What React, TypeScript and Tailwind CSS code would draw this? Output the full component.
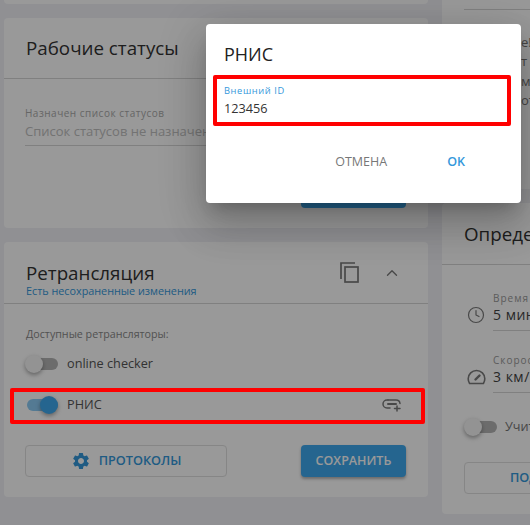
import { Clock, ChevronUp } from 'lucide-react';
import { MdSettings } from 'react-icons/md';

function Toggle({ on }: { on?: boolean }) {
  return (
    <div className="relative h-[12px] w-[31px] shrink-0">
      <div className={`h-[12px] w-[31px] rounded-full ${on ? 'bg-[#3fa9ee]/60' : 'bg-[#b5b5b5]'}`} />
      <div
        className={`absolute top-[-3px] h-[18px] w-[18px] rounded-full shadow-[0_2px_4px_rgba(0,0,0,0.35)] ${
          on ? 'left-[13px] bg-[#3fa9ee]' : 'left-[-2px] bg-[#f5f5f5]'
        }`}
      />
    </div>
  );
}

function LinkPlus() {
  return (
    <svg width="20" height="14" viewBox="0 0 20 14" fill="none" stroke="#7a7a7a" strokeWidth="1.5" strokeLinecap="round">
      <path d="M6 2H5a4 4 0 0 0 0 8h3" />
      <path d="M6 6h8" strokeWidth="2" />
      <path d="M6 2h8a4 4 0 0 1 4 3.5" />
      <path d="M15 8v5M12.5 10.5h5.5" />
    </svg>
  );
}

function CopyIcon() {
  return (
    <svg width="19" height="21" viewBox="0 0 19 21" fill="none" stroke="#7a7a7a" strokeWidth="1.7">
      <path d="M1 17V1h14" />
      <rect x="5" y="5" width="13" height="15" />
    </svg>
  );
}

function GaugeIcon() {
  return (
    <svg width="19" height="18" viewBox="0 0 19 18" fill="none" stroke="#7a7a7a" strokeWidth="1.6" strokeLinecap="round">
      <path d="M2.6 15.5a8.6 8.6 0 0 1-1.4-4.8A8.4 8.4 0 0 1 9.5 2.5c4.6 0 8.3 3.7 8.3 8.2 0 1.8-.5 3.4-1.4 4.8z" />
      <path d="M8.5 11.5l4-4" strokeWidth="2.4" />
    </svg>
  );
}

function Field({ label, value, icon }: { label: string; value: string; icon: React.ReactNode }) {
  return (
    <div className="flex items-start">
      <div className="mt-[15px] w-[29px] shrink-0 pl-[3px]">{icon}</div>
      <div className="w-[200px] border-b border-[#d5d5d5] pb-[5px]">
        <div className="whitespace-nowrap text-[10px] leading-[14px] tracking-[1px] text-[#999]">{label}</div>
        <div className="whitespace-nowrap text-[14px] leading-[20px] tracking-[0.5px] text-[#444]">{value}</div>
      </div>
    </div>
  );
}

export default function App() {
  return (
    <div className="relative h-[525px] w-[530px] overflow-hidden bg-[#f0f0f5] font-['Open_Sans',sans-serif]">
      <div className="flex gap-[14px] pl-1">
        {/* left column */}
        <div className="flex w-[424px] shrink-0 flex-col gap-[14px]">
          <div className="h-1 rounded-b bg-white" />

          <div className="h-[210px] rounded bg-white">
            <div className="flex h-[61px] items-center border-b border-[#d5d5d5] px-[22px] pt-px">
              <h2 className="text-[18.75px] font-medium text-[#333]">Рабочие статусы</h2>
            </div>
            <div className="px-[21px] pt-[27px]">
              <div className="whitespace-nowrap text-[10px] leading-[14px] tracking-[0.5px] text-[#aaa]">Назначен список статусов</div>
              <div className="mt-px w-[190px] whitespace-nowrap border-b border-[#d5d5d5] pb-[4px] text-[13px] leading-[20px] text-[#c0c0c0]">
                Список статусов не назначен
              </div>
            </div>
            <div className="mt-[39px] flex justify-end pr-[22px]">
              <div className="h-[23px] w-[105px] rounded-b-sm bg-[#3fa9ee]" />
            </div>
          </div>

          <div className="h-[255px] rounded bg-white">
            <div className="relative h-[62px] border-b border-[#d5d5d5] px-[22px] pt-[18px]">
              <h2 className="text-[18.75px] font-medium leading-[26px] text-[#333]">Ретрансляция</h2>
              <div className="-mt-[2px] text-[10.8px] leading-[14px] text-[#3498db]">Есть несохраненные изменения</div>
              <div className="absolute right-[27px] top-[20px] flex items-center gap-[24px] text-[#7a7a7a]">
                <CopyIcon />
                <ChevronUp size={18} strokeWidth={1.8} />
              </div>
            </div>
            <div className="px-[21px] pt-[22px]">
              <div className="pl-px text-[10.7px] leading-[16px] text-[#888]">Доступные ретрансляторы:</div>
              <div className="mt-[11px] flex h-[22px] items-center gap-[9px] pl-[2px]">
                <Toggle />
                <span className="text-[12.7px] text-[#555]">online checker</span>
              </div>
              <div className="mt-[19px] flex h-[22px] items-center pl-[2px]">
                <Toggle on />
                <span className="ml-[9px] text-[12.7px] text-[#555]">РНИС</span>
                <div className="ml-auto mr-[5px] -mt-[1px]">
                  <LinkPlus />
                </div>
              </div>
              <div className="mt-[29px] flex justify-between pr-px">
                <div className="flex h-[32px] w-[202px] items-center justify-center gap-[8px] rounded-sm border border-[#e0e0e0] text-[12.7px] font-semibold text-[#3498db]">
                  <MdSettings size={20} />
                  ПРОТОКОЛЫ
                </div>
                <div className="flex h-[32px] w-[105px] items-center justify-center rounded-sm bg-[#3fa9ee] text-[12.5px] font-semibold text-white shadow-[0_2px_3px_rgba(0,0,0,0.3)]">
                  СОХРАНИТЬ
                </div>
              </div>
            </div>
          </div>
        </div>

        {/* right column, cut off by the window */}
        <div className="flex w-[300px] shrink-0 flex-col gap-[14px]">
          <div className="h-[189px] rounded-b bg-white px-[22px] pt-[9px]">
            <div className="w-[66px] border-t border-[#d5d5d5]" />
            <div className="mt-[23px] w-[90px] overflow-hidden whitespace-nowrap pl-[57px] text-[13px] leading-[19.3px] text-[#777]">
              <div>е!</div>
              <div>т к</div>
              <div>мо</div>
              <div>от</div>
            </div>
          </div>
          <div className="h-[311px] rounded bg-white">
            <div className="flex h-[62px] items-center border-b border-[#d5d5d5] px-[22px] pt-[2px]">
              <h2 className="whitespace-nowrap text-[18.75px] font-medium text-[#333]">Определение стоянок</h2>
            </div>
            <div className="flex flex-col gap-[22px] pl-[22px] pt-[26px]">
              <Field label="Время до стоянки" value="5 мин" icon={<Clock size={18} strokeWidth={1.6} className="text-[#7a7a7a]" />} />
              <Field label="Скорость" value="3 км/ч" icon={<GaugeIcon />} />
            </div>
            <div className="mt-[23px] flex h-[22px] items-center gap-[8px] pl-[24px]">
              <Toggle />
              <span className="whitespace-nowrap text-[12.7px] text-[#777]">Учитывать</span>
            </div>
            <div className="ml-[22px] mt-[24px] flex h-[32px] w-[202px] items-center rounded-sm border border-[#e0e0e0] pl-[45px] text-[12.7px] font-semibold text-[#3498db]">
              ПОДРОБНЕЕ
            </div>
          </div>
        </div>
      </div>

      {/* backdrop */}
      <div className="absolute inset-0 bg-black/40" />

      {/* dialog */}
      <div className="absolute left-[206px] top-[24px] h-[179px] w-[315px] rounded-sm bg-white shadow-[0_11px_15px_-7px_rgba(0,0,0,0.2),0_24px_38px_3px_rgba(0,0,0,0.14),0_9px_46px_8px_rgba(0,0,0,0.12)]">
        <div className="px-[18px] pt-[18px] text-[18px] leading-[24px] text-[#222]">РНИС</div>
        <div className="mt-[19px] px-[18px]">
          <div className="text-[9.3px] leading-[12px] tracking-[0.6px] text-[#3498db]">Внешний ID</div>
          <div className="mt-px text-[12.7px] leading-[20px] text-[#333]">123456</div>
        </div>
        <div className="mt-[35px] flex justify-end gap-[60px] pr-[56px] text-[12.5px] font-medium">
          <span className="text-[#777]">ОТМЕНА</span>
          <span className="font-semibold text-[#3498db]">OK</span>
        </div>
      </div>

      {/* red annotations */}
      <div className="absolute left-[213px] top-[75px] h-[51px] w-[298px] rounded-[2px] border-4 border-[#f00]" />
      <div className="absolute left-[10px] top-[388px] h-[36px] w-[415px] rounded-[2px] border-4 border-[#f00]" />
    </div>
  );
}
